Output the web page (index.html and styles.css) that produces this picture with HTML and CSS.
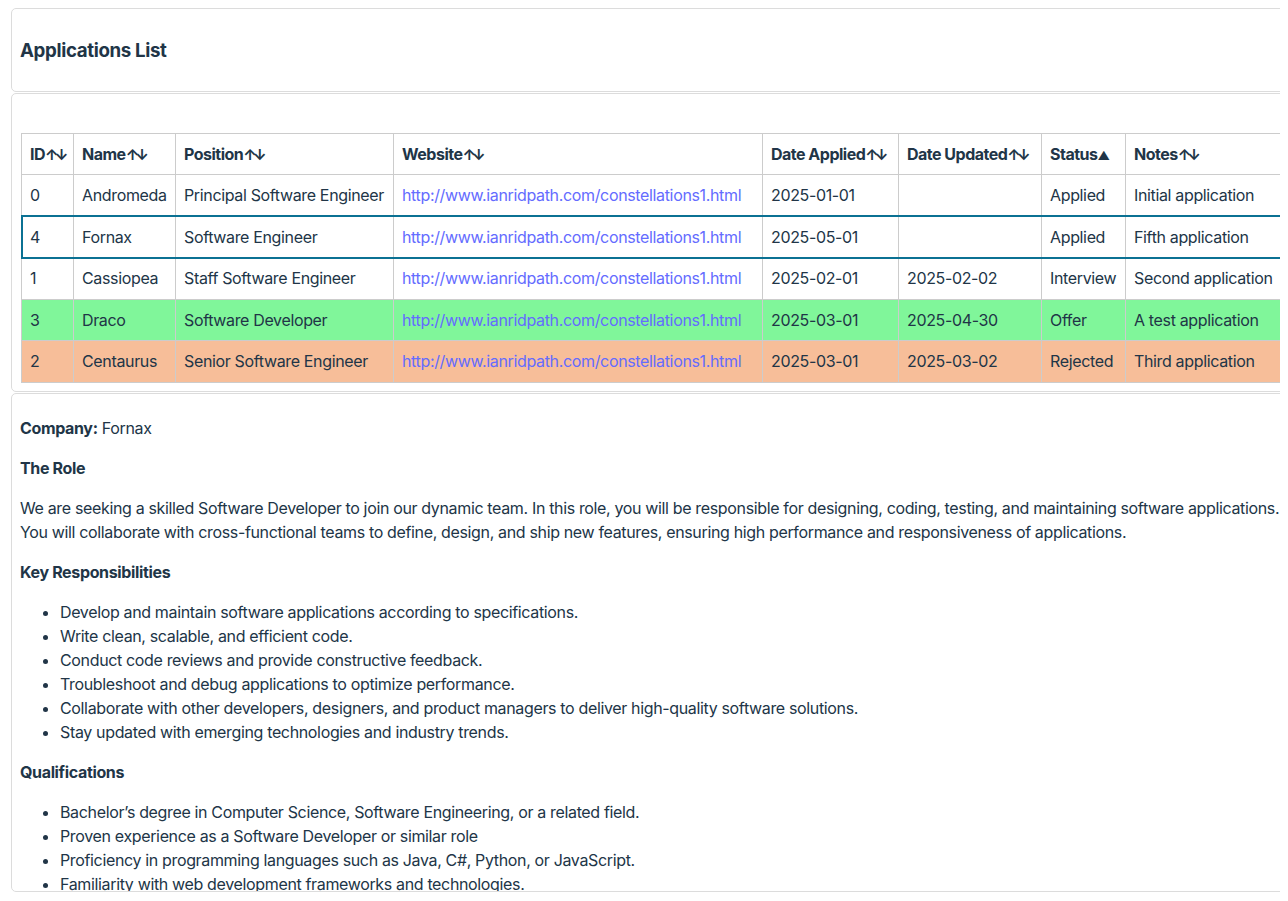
FILE: index.html
```html
<!DOCTYPE html>
<html lang="en">
<head>
<meta charset="utf-8">
<title>Applications List</title>
<link rel="stylesheet" href="styles.css">
</head>
<body>
<div class="page">
  <section class="card card-title">
    <h3 class="title">Applications List</h3>
  </section>
  <section class="card card-table">
    <table class="apps">
      <colgroup>
        <col class="c-id"><col class="c-name"><col class="c-pos"><col class="c-web"><col class="c-da"><col class="c-du"><col class="c-st"><col class="c-notes">
      </colgroup>
      <thead>
        <tr>
          <th>ID<span class="sort">↑↓</span></th>
          <th>Name<span class="sort">↑↓</span></th>
          <th>Position<span class="sort">↑↓</span></th>
          <th>Website<span class="sort">↑↓</span></th>
          <th>Date Applied<span class="sort">↑↓</span></th>
          <th>Date Updated<span class="sort">↑↓</span></th>
          <th>Status<span class="sort-on">▲</span></th>
          <th>Notes<span class="sort">↑↓</span></th>
        </tr>
      </thead>
      <tbody>
        <tr>
          <td>0</td><td>Andromeda</td><td>Principal Software Engineer</td>
          <td><a href="#">http://www.ianridpath.com/constellations1.html</a></td>
          <td>2025-01-01</td><td></td><td>Applied</td><td>Initial application</td>
        </tr>
        <tr class="selected">
          <td>4</td><td>Fornax</td><td>Software Engineer</td>
          <td><a href="#">http://www.ianridpath.com/constellations1.html</a></td>
          <td>2025-05-01</td><td></td><td>Applied</td><td>Fifth application</td>
        </tr>
        <tr>
          <td>1</td><td>Cassiopea</td><td>Staff Software Engineer</td>
          <td><a href="#">http://www.ianridpath.com/constellations1.html</a></td>
          <td>2025-02-01</td><td>2025-02-02</td><td>Interview</td><td>Second application</td>
        </tr>
        <tr class="offer">
          <td>3</td><td>Draco</td><td>Software Developer</td>
          <td><a href="#">http://www.ianridpath.com/constellations1.html</a></td>
          <td>2025-03-01</td><td>2025-04-30</td><td>Offer</td><td>A test application</td>
        </tr>
        <tr class="rejected">
          <td>2</td><td>Centaurus</td><td>Senior Software Engineer</td>
          <td><a href="#">http://www.ianridpath.com/constellations1.html</a></td>
          <td>2025-03-01</td><td>2025-03-02</td><td>Rejected</td><td>Third application</td>
        </tr>
      </tbody>
    </table>
  </section>
  <section class="card card-detail">
    <p><strong>Company:</strong> Fornax</p>
    <p class="sub">The Role</p>
    <p>We are seeking a skilled Software Developer to join our dynamic team. In this role, you will be responsible for designing, coding, testing, and maintaining software applications. You will collaborate with cross-functional teams to define, design, and ship new features, ensuring high performance and responsiveness of applications.</p>
    <p class="sub">Key Responsibilities</p>
    <ul>
      <li>Develop and maintain software applications according to specifications.</li>
      <li>Write clean, scalable, and efficient code.</li>
      <li>Conduct code reviews and provide constructive feedback.</li>
      <li>Troubleshoot and debug applications to optimize performance.</li>
      <li>Collaborate with other developers, designers, and product managers to deliver high-quality software solutions.</li>
      <li>Stay updated with emerging technologies and industry trends.</li>
    </ul>
    <p class="sub">Qualifications</p>
    <ul>
      <li>Bachelor’s degree in Computer Science, Software Engineering, or a related field.</li>
      <li>Proven experience as a Software Developer or similar role</li>
      <li>Proficiency in programming languages such as Java, C#, Python, or JavaScript.</li>
      <li>Familiarity with web development frameworks and technologies.</li>
      <li>Strong problem-solving skills and attention to detail.</li>
      <li>Excellent communication and teamwork abilities.</li>
    </ul>
  </section>
</div>
</body>
</html>
```

FILE: styles.css
```css
html {
  overflow: hidden;
}
body {
  margin: 8px;
  font-family: Inter, "Noto Sans", "Liberation Sans", sans-serif;
  font-size: 16px;
  line-height: 1.5;
  letter-spacing: -0.35px;
  color: #213547;
  background: #ffffff;
}
.page {
  padding-left: 3px;
  width: 1290px;
  display: flex;
  flex-direction: column;
  gap: 1px;
}
.card {
  border: 1px solid #dcdcdc;
  border-radius: 5px;
  padding: 8px;
  background: #fff;
}
.title {
  margin: 20px 0 18px;
  font-size: 18.7px;
  line-height: 28px;
  font-weight: 700;
}
.card-table {
  padding-top: 39px;
}
.apps {
  border-collapse: collapse;
  table-layout: fixed;
  width: 1260px;
  margin-left: 1px;
  white-space: nowrap;
}
.c-id { width: 52px; }
.c-name { width: 102px; }
.c-pos { width: 218px; }
.c-web { width: 369px; }
.c-da { width: 136px; }
.c-du { width: 143px; }
.c-st { width: 84px; }
.c-notes { width: 156px; }
.apps th,
.apps td {
  border: 1px solid #cccccc;
  padding: 8px 8px;
  line-height: 24.5px;
  text-align: left;
}
.apps th {
  font-weight: 700;
  line-height: 24px;
  letter-spacing: -0.5px;
}
.sort {
  display: inline-block;
  line-height: 1;
  font-size: 15px;
  letter-spacing: -4px;
  font-weight: 700;
}
.sort-on {
  display: inline-block;
  line-height: 1;
  font-size: 12px;
}
.apps a {
  color: #646cff;
  text-decoration: none;
}
.apps tr.selected {
  outline: 2px solid #0b7193;
  outline-offset: -1px;
}
.apps tr.offer td {
  background: #80f69a;
}
.apps tr.rejected td {
  background: #f7be99;
}
.card-detail {
  padding-top: 6px;
  height: 483px;
  overflow: hidden;
}
.card-detail p {
  margin: 16px 0;
}
.card-detail .sub {
  font-weight: 700;
}
.card-detail ul {
  margin: 16px 0;
  padding-left: 40px;
}
```
